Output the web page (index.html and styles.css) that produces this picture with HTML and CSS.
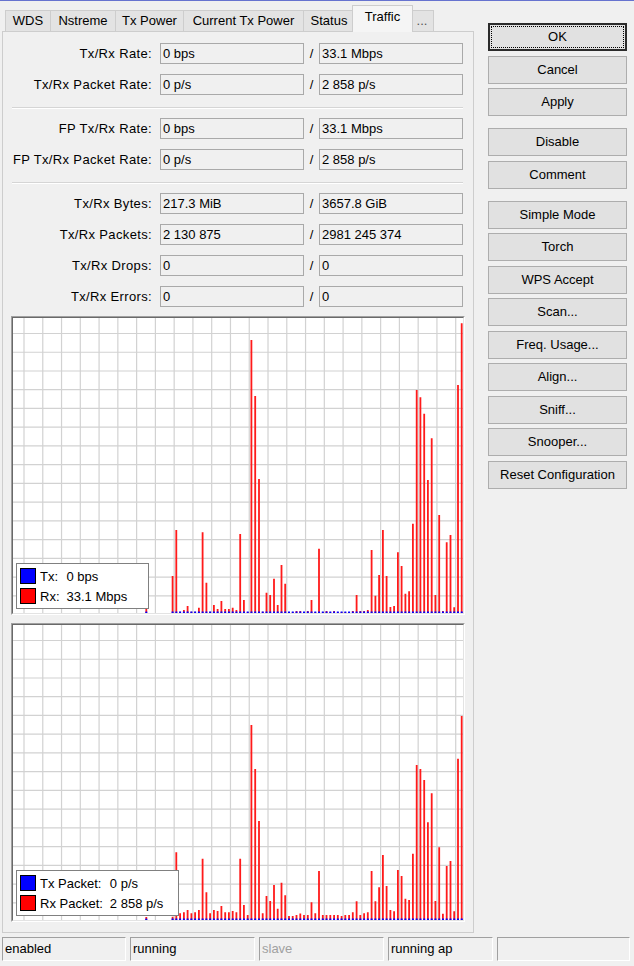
FILE: index.html
```html
<!DOCTYPE html>
<html>
<head>
<meta charset="utf-8">
<title>Wireless Traffic</title>
<link rel="stylesheet" href="styles.css">
</head>
<body>
<div class="topline"></div>
<div class="window">
  <div class="main">
    <div class="tabs">
      <div class="tab w-wds">WDS</div>
      <div class="tab w-nst">Nstreme</div>
      <div class="tab w-txp">Tx Power</div>
      <div class="tab w-cur">Current Tx Power</div>
      <div class="tab w-sta">Status</div>
      <div class="tab active w-tra">Traffic</div>
      <div class="tab w-more">...</div>
    </div>
    <div class="panel">
      <div class="row"><span class="lbl">Tx/Rx Rate:</span><span class="fld">0 bps</span><span class="sl">/</span><span class="fld">33.1 Mbps</span></div>
      <div class="row"><span class="lbl">Tx/Rx Packet Rate:</span><span class="fld">0 p/s</span><span class="sl">/</span><span class="fld">2 858 p/s</span></div>
      <div class="sep"></div>
      <div class="row"><span class="lbl">FP Tx/Rx Rate:</span><span class="fld">0 bps</span><span class="sl">/</span><span class="fld">33.1 Mbps</span></div>
      <div class="row"><span class="lbl">FP Tx/Rx Packet Rate:</span><span class="fld">0 p/s</span><span class="sl">/</span><span class="fld">2 858 p/s</span></div>
      <div class="sep"></div>
      <div class="row"><span class="lbl">Tx/Rx Bytes:</span><span class="fld">217.3 MiB</span><span class="sl">/</span><span class="fld">3657.8 GiB</span></div>
      <div class="row"><span class="lbl">Tx/Rx Packets:</span><span class="fld">2 130 875</span><span class="sl">/</span><span class="fld">2981 245 374</span></div>
      <div class="row"><span class="lbl">Tx/Rx Drops:</span><span class="fld">0</span><span class="sl">/</span><span class="fld">0</span></div>
      <div class="row"><span class="lbl">Tx/Rx Errors:</span><span class="fld">0</span><span class="sl">/</span><span class="fld">0</span></div>

      <div class="graph">
        <div class="plot">
          <svg class="chart" viewBox="0 0 450 295" width="450" height="295">
            <path class="grid" d="M11 0V295M29.77 0V295M48.54 0V295M67.31 0V295M86.08 0V295M104.85 0V295M123.62 0V295M142.39 0V295M161.16 0V295M179.93 0V295M198.7 0V295M217.47 0V295M236.24 0V295M255.01 0V295M273.78 0V295M292.55 0V295M311.32 0V295M330.09 0V295M348.86 0V295M367.63 0V295M386.4 0V295M405.17 0V295M423.94 0V295M442.71 0V295M0 15.5H450M0 34.24H450M0 52.98H450M0 71.72H450M0 90.46H450M0 109.2H450M0 127.94H450M0 146.68H450M0 165.42H450M0 184.16H450M0 202.9H450M0 221.64H450M0 240.38H450M0 259.12H450M0 277.86H450"/>
            <path class="rx" d="M133.3 295V290M159.6 295V258M163.3 295V212M167.1 295V293.7M170.9 295V292M174.6 295V288M178.4 295V293.7M182.1 295V293.7M185.9 295V289.7M189.6 295V214.3M193.4 295V264.7M197.1 295V293.7M200.9 295V287M204.6 295V291M208.4 295V283M212.2 295V291M215.9 295V291M219.7 295V289.7M223.4 295V292M227.2 295V216M230.9 295V282M234.7 295V294M238.4 295V22M242.2 295V78M246 295V161M249.7 295V293.7M253.5 295V274.7M257.2 295V277M261 295V260.7M264.7 295V287M268.5 295V247M272.2 295V265.7M276 295V294M279.7 295V294M283.5 295V293M287.3 295V293M291 295V294M294.8 295V293M298.5 295V282M302.3 295V294M306 295V230.7M309.8 295V294M313.5 295V293M317.3 295V294M321.1 295V293M324.8 295V294M328.6 295V294M332.3 295V294M336.1 295V294M339.8 295V293M343.6 295V277M347.3 295V293M351.1 295V293M354.8 295V292M358.6 295V232M362.4 295V277.7M366.1 295V257M369.9 295V212M373.6 295V258M377.4 295V289M381.1 295V288M384.9 295V234.3M388.6 295V248M392.4 295V275.7M396.1 295V273.3M399.9 295V205.7M403.7 295V72M407.4 295V79.3M411.2 295V95.7M414.9 295V162M418.7 295V120.3M422.4 295V277M426.2 295V197M429.9 295V293M433.7 295V224.3M437.5 295V217M441.2 295V289.3M445 295V67M448.7 295V5.3"/>
            <path class="tx" d="M132.3 294.3H134.3"/>
            <path class="tx dashed" d="M158.6 294.3H450"/>
          </svg>
          <div class="legend lg1">
            <span class="sq blue"></span><span class="lt">Tx:</span><span class="lv">0 bps</span>
            <span class="sq red"></span><span class="lt">Rx:</span><span class="lv">33.1 Mbps</span>
          </div>
        </div>
      </div>

      <div class="graph">
        <div class="plot">
          <svg class="chart" viewBox="0 0 450 295" width="450" height="295">
            <path class="grid" d="M11 0V295M29.77 0V295M48.54 0V295M67.31 0V295M86.08 0V295M104.85 0V295M123.62 0V295M142.39 0V295M161.16 0V295M179.93 0V295M198.7 0V295M217.47 0V295M236.24 0V295M255.01 0V295M273.78 0V295M292.55 0V295M311.32 0V295M330.09 0V295M348.86 0V295M367.63 0V295M386.4 0V295M405.17 0V295M423.94 0V295M442.71 0V295M0 15.5H450M0 34.24H450M0 52.98H450M0 71.72H450M0 90.46H450M0 109.2H450M0 127.94H450M0 146.68H450M0 165.42H450M0 184.16H450M0 202.9H450M0 221.64H450M0 240.38H450M0 259.12H450M0 277.86H450"/>
            <path class="rx" d="M133.3 295V292M159.6 295V291.7M163.3 295V227.3M167.1 295V288.3M170.9 295V287.3M174.6 295V285M178.4 295V288.3M182.1 295V287.3M185.9 295V285M189.6 295V233.7M193.4 295V267.3M197.1 295V288.3M200.9 295V285M204.6 295V286M208.4 295V281M212.2 295V287.3M215.9 295V287.3M219.7 295V286M223.4 295V287.3M227.2 295V233.7M230.9 295V280M234.7 295V290M238.4 295V100M242.2 295V144M246 295V196M249.7 295V288.3M253.5 295V271M257.2 295V276M261 295V260M264.7 295V283.7M268.5 295V257.7M272.2 295V270.3M276 295V291M279.7 295V291M283.5 295V290M287.3 295V288.5M291 295V290M294.8 295V290M298.5 295V277.3M302.3 295V288.3M306 295V246M309.8 295V290M313.5 295V290M317.3 295V290M321.1 295V290M324.8 295V290M328.6 295V291M332.3 295V290M336.1 295V290M339.8 295V287.3M343.6 295V276.3M347.3 295V290M351.1 295V288.3M354.8 295V287.3M358.6 295V246M362.4 295V276.3M366.1 295V262.3M369.9 295V230M373.6 295V261M377.4 295V285M381.1 295V286.3M384.9 295V245M388.6 295V251M392.4 295V273.7M396.1 295V275M399.9 295V228.7M403.7 295V140M407.4 295V144M411.2 295V155M414.9 295V197.3M418.7 295V168.3M422.4 295V276M426.2 295V222.3M429.9 295V288.7M433.7 295V241M437.5 295V236M441.2 295V286.3M445 295V133.7M448.7 295V91"/>
            <path class="tx" d="M132.3 294.3H134.3"/>
            <path class="tx dashed" d="M158.6 294.3H450"/>
          </svg>
          <div class="legend lg2">
            <span class="sq blue"></span><span class="lt">Tx Packet:</span><span class="lv">0 p/s</span>
            <span class="sq red"></span><span class="lt">Rx Packet:</span><span class="lv">2 858 p/s</span>
          </div>
        </div>
      </div>
    </div>
  </div>

  <div class="buttons">
    <div class="btn ok">OK</div>
    <div class="btn">Cancel</div>
    <div class="btn">Apply</div>
    <div class="btn g">Disable</div>
    <div class="btn">Comment</div>
    <div class="btn g">Simple Mode</div>
    <div class="btn">Torch</div>
    <div class="btn">WPS Accept</div>
    <div class="btn">Scan...</div>
    <div class="btn">Freq. Usage...</div>
    <div class="btn">Align...</div>
    <div class="btn">Sniff...</div>
    <div class="btn">Snooper...</div>
    <div class="btn">Reset Configuration</div>
  </div>
</div>

<div class="status">
  <div class="cell c1">enabled</div>
  <div class="cell c2">running</div>
  <div class="cell c3 dim">slave</div>
  <div class="cell c4">running ap</div>
  <div class="cell c5"></div>
</div>
</body>
</html>
```

FILE: styles.css
```css
html, body {
  margin: 0;
  padding: 0;
}

body {
  width: 634px;
  height: 966px;
  overflow: hidden;
  background: #f0f0f0;
  font-family: "Liberation Sans", Arial, sans-serif;
  font-size: 13px;
  color: #000;
}

.topline {
  height: 1px;
  background: #6673cf;
}

.window {
  display: flex;
  align-items: flex-start;
}

.main {
  width: 472px;
  margin-left: 2px;
}

/* ---------- tabs ---------- */
.tabs {
  display: flex;
  align-items: flex-end;
  height: 30px;
  padding-left: 3px;
  position: relative;
  z-index: 2;
}

.tab {
  box-sizing: border-box;
  height: 21px;
  line-height: 20px;
  text-align: center;
  white-space: nowrap;
  background: #e3e3e3;
  border: 1px solid #cdcdcd;
  border-bottom: 0;
  margin-right: -1px;
}

.tab.active {
  height: 27px;
  line-height: 22px;
  background: #f5f5f5;
  margin: 0 -3px -1px -2px;
  position: relative;
}

.w-wds { width: 46px; }
.w-nst { width: 66px; }
.w-txp { width: 69px; }
.w-cur { width: 121px; }
.w-sta { width: 52px; }
.w-tra { width: 61px; }
.w-more { width: 24px; color: #555; }

/* ---------- panel ---------- */
.panel {
  box-sizing: border-box;
  height: 902px;
  border: 1px solid #cdcdcd;
  padding-top: 6px;
}

.row {
  display: flex;
  align-items: center;
  height: 31px;
}

.lbl {
  width: 149px;
  margin-right: 8px;
  text-align: right;
  white-space: nowrap;
  letter-spacing: 0.35px;
}

.fld {
  box-sizing: border-box;
  width: 144px;
  height: 21px;
  line-height: 19px;
  padding-left: 2px;
  border: 1px solid #a9a9a9;
  background: #f0f0f0;
  white-space: nowrap;
}

.sl {
  width: 15px;
  text-align: center;
}

.sep {
  margin: 7px 10px 4px 9px;
  border-top: 1px solid #d5d5d5;
  border-bottom: 1px solid #ffffff;
}

/* ---------- graphs ---------- */
.graph {
  box-sizing: border-box;
  width: 454px;
  margin: 4px 0 0 8px;
  border: 1px solid;
  border-color: #a0a0a0 #ffffff #ffffff #a0a0a0;
}

.graph + .graph {
  margin-top: 8px;
}

.plot {
  position: relative;
  height: 295px;
  border: 1px solid;
  border-color: #696969 #e3e3e3 #e3e3e3 #696969;
}

.chart {
  display: block;
  width: 450px;
  height: 295px;
  background: #ffffff;
}

.grid {
  fill: none;
  stroke: #d2d2d2;
  stroke-width: 1.2;
}

.rx {
  fill: none;
  stroke: #ff1a1a;
  stroke-width: 1.8;
}

.tx {
  fill: none;
  stroke: #0000ff;
  stroke-width: 1.4;
}

.tx.dashed {
  stroke-dasharray: 2 1.755;
}

.legend {
  position: absolute;
  left: 3px;
  top: 245px;
  box-sizing: border-box;
  height: 46px;
  padding: 4px 0 0 3px;
  background: #ffffff;
  border: 1px solid #808080;
  display: grid;
  grid-template-columns: 17px auto 1fr;
  grid-auto-rows: 16px;
  row-gap: 4px;
  align-items: center;
  white-space: nowrap;
}

.lg1 { width: 133px; }
.lg2 { width: 163px; }

.sq {
  box-sizing: border-box;
  width: 16px;
  height: 16px;
  border: 1px solid #000;
}

.sq.blue { background: #0000ff; }
.sq.red { background: #ff0000; }

.lt {
  padding-left: 3px;
}

.lv {
  padding-left: 7px;
}

/* ---------- buttons ---------- */
.buttons {
  width: 139px;
  margin-left: 14px;
  padding-top: 22px;
}

.btn {
  box-sizing: border-box;
  height: 28px;
  line-height: 26px;
  text-align: center;
  white-space: nowrap;
  background: #e1e1e1;
  border: 1px solid #adadad;
}

.btn + .btn {
  margin-top: 4.5px;
}

.btn.g {
  margin-top: 12px;
}

.btn.ok {
  border: 2px solid #2b2b2b;
  line-height: 24px;
  outline: 1px dotted #000;
  outline-offset: -4px;
}

/* ---------- status bar ---------- */
.status {
  display: flex;
  gap: 4px;
  padding-left: 2px;
  margin-top: 4px;
}

.cell {
  box-sizing: border-box;
  height: 24px;
  line-height: 22px;
  padding-left: 2px;
  border: 1px solid;
  border-color: #a0a0a0 #ffffff #ffffff #a0a0a0;
  white-space: nowrap;
}

.c1 { width: 124px; }
.c2 { width: 125px; }
.c3 { width: 125px; }
.c4 { width: 105px; }
.c5 { width: 133px; }

.cell.dim {
  color: #a0a0a0;
}
```
